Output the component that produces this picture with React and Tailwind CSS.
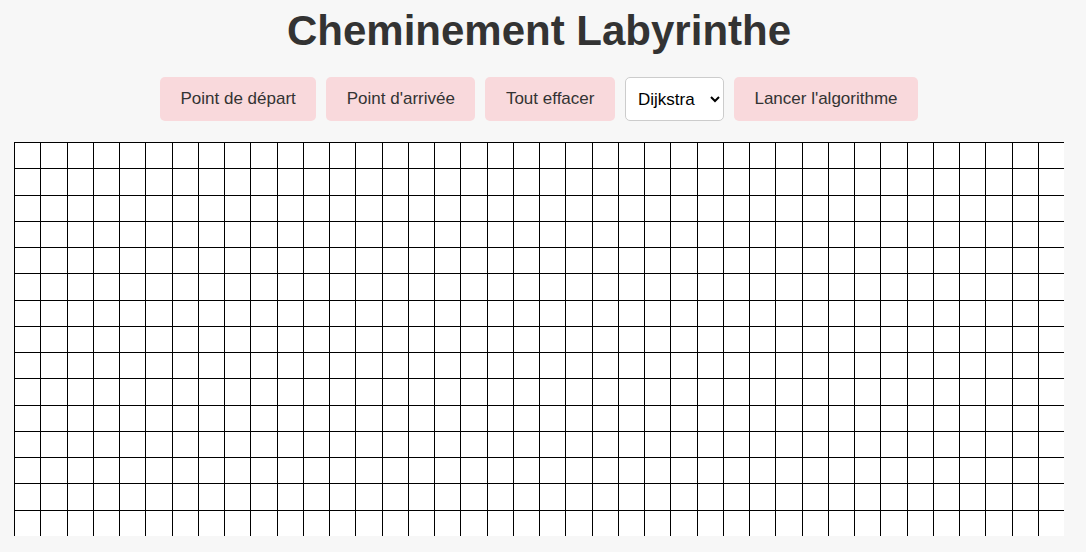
import React, { useState } from 'react';

const COLS = 40;
const ROWS = 15;

const buttons = ['Point de départ', "Point d'arrivée", 'Tout effacer'];

export default function App() {
  const [algo, setAlgo] = useState('dijkstra');
  const cells = Array.from({ length: COLS * ROWS });

  return (
    <div className="min-h-screen bg-[#f7f7f7] font-['Liberation_Sans',Arial,sans-serif] text-[#333]">
      <div className="w-[1078px] flex flex-col items-center">
        <h1 className="mt-[7px] text-[42px] leading-[48px] font-bold text-[#333]">
          Cheminement Labyrinthe
        </h1>

        <div className="mt-[22px] flex items-center gap-[10px]">
          {buttons.map(label => (
            <button
              key={label}
              className="h-[44px] px-[20.5px] rounded-[5px] bg-[#f9d9dc] text-[17px] text-[#333]"
            >
              {label}
            </button>
          ))}
          <select
            value={algo}
            onChange={e => setAlgo(e.target.value)}
            className="h-[44px] w-[99px] pl-[8px] pr-[4px] rounded-[5px] border border-[#ccc] bg-white text-[17px] text-black"
          >
            <option value="dijkstra">Dijkstra</option>
            <option value="astar">A*</option>
          </select>
          <button className="h-[44px] px-[20.5px] rounded-[5px] bg-[#f9d9dc] text-[17px] text-[#333]">
            Lancer l'algorithme
          </button>
        </div>

        <div className="mt-[21px] w-[1050px] h-[393.75px] overflow-hidden bg-white">
          <div className="grid grid-cols-[repeat(40,26.25px)] grid-rows-[repeat(15,26.25px)]">
            {cells.map((_, i) => (
              <div key={i} className="border-l border-t border-black" />
            ))}
          </div>
        </div>
      </div>
    </div>
  );
}
